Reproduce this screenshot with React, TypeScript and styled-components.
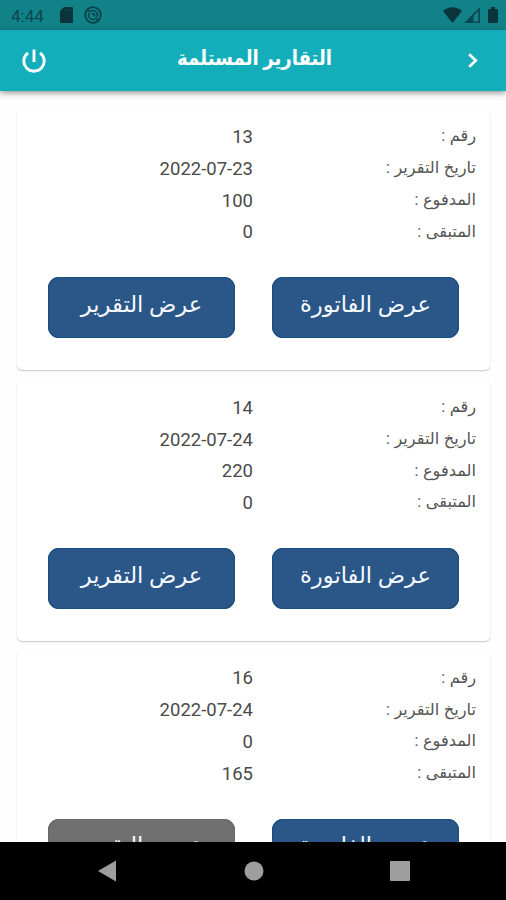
import React from "react";
import styled, { createGlobalStyle } from "styled-components";

const Global = createGlobalStyle`
  * { box-sizing: border-box; }
  body { margin: 0; background: #fff; }
`;

const Screen = styled.div`
  width: 506px;
  height: 900px;
  display: flex;
  flex-direction: column;
  overflow: hidden;
  background: #fefefe;
  font-family: Roboto, "DejaVu Sans", sans-serif;
`;

const StatusBar = styled.div`
  flex: none;
  height: 30px;
  display: flex;
  align-items: center;
  justify-content: space-between;
  padding: 0 8px 0 11px;
  background: #118287;
  color: #0b4750;
`;

const StatusGroup = styled.div<{ $gap: number }>`
  display: flex;
  align-items: center;
  gap: ${(p) => p.$gap}px;
  svg { display: block; }
`;

const Clock = styled.span`
  width: 38px;
  font-size: 17px;
  line-height: 30px;
  padding-top: 1px;
`;

const AppBar = styled.header`
  flex: none;
  z-index: 1;
  height: 61px;
  display: grid;
  grid-template-columns: 67px 1fr 67px;
  align-items: center;
  justify-items: center;
  background: #14aeba;
  color: #fff;
  box-shadow: 0 2px 6px rgba(0, 0, 0, 0.42);
  svg { display: block; }
`;

const Title = styled.h1`
  margin: 0 0 6px 3px;
  font-size: 20.5px;
  line-height: 30px;
  font-weight: 700;
  white-space: nowrap;
  transform: scaleX(0.885);
`;

const Reports = styled.main`
  flex: 1;
  min-height: 0;
  overflow: hidden;
  display: flex;
  flex-direction: column;
  gap: 10.7px;
  padding: 19px 16px 0 17px;
  direction: rtl;
`;

const Card = styled.section`
  flex: none;
  height: 260px;
  padding: 10.5px 14px 0;
  border-radius: 5px;
  background: #fff;
  box-shadow: 0 1px 1.5px rgba(0, 0, 0, 0.22), 0 0 1px rgba(0, 0, 0, 0.06);
`;

const Row = styled.div`
  display: grid;
  grid-template-columns: 223px 1fr;
  height: 31.8px;
  align-items: center;
`;

const Label = styled.span`
  font-size: 16.2px;
  line-height: 30px;
  color: #555;
  white-space: nowrap;
  word-spacing: 0.5px;
`;

const Value = styled.span`
  font-size: 18.5px;
  line-height: 30px;
  color: #4a4a4a;
  direction: ltr;
  text-align: right;
  padding-top: 1.4px;
`;

const Actions = styled.div`
  display: grid;
  grid-template-columns: 187px 187px;
  gap: 37px;
  padding: 29.8px 17px 0;
`;

const ActionButton = styled.button<{ $muted?: boolean }>`
  height: 61px;
  border: 0;
  padding: 0 0 6px;
  border-radius: 11px;
  background: ${(p) => (p.$muted ? "#707070" : "#2a5788")};
  box-shadow: inset 0 0 0 1px ${(p) => (p.$muted ? "#686868" : "#164d82")};
  color: #f5f9ff;
  font: 400 22.6px/30px Roboto, "DejaVu Sans", sans-serif;
  white-space: nowrap;
`;

const NavBar = styled.nav`
  flex: none;
  height: 58.5px;
  background: #000;
  display: flex;
  justify-content: center;
  align-items: center;
  padding-left: 1px;
  gap: 126px;
  color: #9e9e9e;
  svg { display: block; }
`;

const reports = [
  { id: "13", date: "2022-07-23", paid: "100", rest: "0", muted: false },
  { id: "14", date: "2022-07-24", paid: "220", rest: "0", muted: false },
  { id: "16", date: "2022-07-24", paid: "0", rest: "165", muted: true },
];

export default function App() {
  return (
    <>
      <Global />
      <Screen>
        <StatusBar>
          <StatusGroup $gap={11}>
            <Clock>4:44</Clock>
            <svg width="13" height="16" viewBox="0 0 13 16">
              <path d="M4 0H12Q13 0 13 1V15Q13 16 12 16H1Q0 16 0 15V4Z" fill="#08343a" />
              <path d="M4.500 2V4.500M7.200 2V4.500M10 2V4.500" stroke="#0c5258" strokeWidth="1" />
            </svg>
            <svg width="18" height="18" viewBox="0 0 18 18" fill="none" stroke="#0a4047">
              <circle cx="9" cy="9" r="7.800" strokeWidth="1.800" />
              <path d="M5 7A4.500 4.500 0 0 0 11 13M7 5A4.500 4.500 0 0 1 13 11" strokeWidth="1.400" />
              <path d="M3.500 3.500L6.500 6.500M11.500 11.500L14.500 14.500" strokeWidth="1.700" />
              <path d="M7 7L11.300 7.800L11 11Z" fill="#0a4047" stroke="none" />
            </svg>
          </StatusGroup>
          <StatusGroup $gap={2}>
            <svg width="19" height="16" viewBox="0 0 19 16">
              <path d="M0 4Q9.500-3.500 19 4L9.500 16Z" fill="#08343a" />
            </svg>
            <svg width="16" height="16" viewBox="0 0 16 16">
              <path d="M0 16L16 0V16Z" fill="#0b4750" />
              <path d="M9.500 8.800L14.300 4V14.500H9.500Z" fill="#118287" />
            </svg>
            <svg width="16" height="16" viewBox="0 0 16 16">
              <path d="M9 0h4v2h2q1 0 1 1v12q0 1-1 1H7q-1 0-1-1V3q0-1 1-1h2z" fill="#08343a" />
            </svg>
          </StatusGroup>
        </StatusBar>
        <AppBar>
          <svg width="24" height="24" viewBox="0 0 24 24" fill="none" stroke="#fff" strokeWidth="2.900">
            <path d="M12 .5V13M6 3.800A10.200 10.200 0 1 0 18 3.800" />
          </svg>
          <Title dir="rtl">التقارير المستلمة</Title>
          <svg width="10" height="15" viewBox="0 0 10 15" fill="none" stroke="#fff" strokeWidth="2.700">
            <path d="M1.200 1.200L7.800 7.500L1.200 13.800" />
          </svg>
        </AppBar>
        <Reports>
          {reports.map((r) => (
            <Card key={r.id}>
              <Row><Label>رقم :</Label><Value>{r.id}</Value></Row>
              <Row><Label>تاريخ التقرير :</Label><Value>{r.date}</Value></Row>
              <Row><Label>المدفوع :</Label><Value>{r.paid}</Value></Row>
              <Row><Label>المتبقى :</Label><Value>{r.rest}</Value></Row>
              <Actions>
                <ActionButton>عرض الفاتورة</ActionButton>
                <ActionButton $muted={r.muted}>عرض التقرير</ActionButton>
              </Actions>
            </Card>
          ))}
        </Reports>
        <NavBar>
          <svg width="18" height="22" viewBox="0 0 18 22"><path d="M0 11L18 0.500V21.500Z" fill="currentColor" /></svg>
          <svg width="22" height="20" viewBox="0 0 22 20"><circle cx="12" cy="10" r="9.500" fill="currentColor" /></svg>
          <svg width="20" height="20" viewBox="0 0 20 20"><rect width="20" height="20" rx="1" fill="currentColor" /></svg>
        </NavBar>
      </Screen>
    </>
  );
}
